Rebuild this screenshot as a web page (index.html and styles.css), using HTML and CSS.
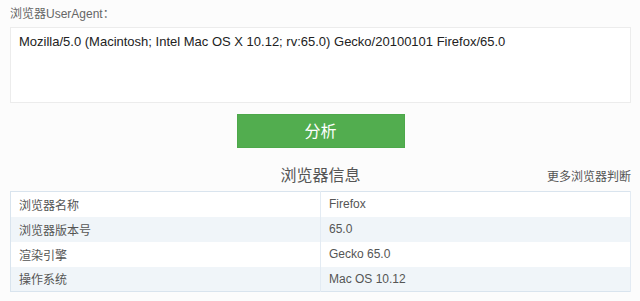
FILE: index.html
```html
<html>
    <head>
        <meta charset="UTF-8" />
        <link rel="stylesheet" href="styles.css">
    </head>
    <body>
        <div class="page">
            <div class="label">浏览器UserAgent：</div>
            <div class="ua_box">Mozilla/5.0 (Macintosh; Intel Mac OS X 10.12; rv:65.0) Gecko/20100101 Firefox/65.0</div>
            <div class="actions">
                <a href="javascript:;" class="analyze">分析</a>
            </div>
            <div class="info_head">
                <h2>浏览器信息</h2>
                <a href="javascript:;" class="more">更多浏览器判断</a>
            </div>
            <table class="info">
                <tr><td>浏览器名称</td><td>Firefox</td></tr>
                <tr><td>浏览器版本号</td><td>65.0</td></tr>
                <tr><td>渲染引擎</td><td>Gecko 65.0</td></tr>
                <tr><td>操作系统</td><td>Mac OS 10.12</td></tr>
            </table>
        </div>
    </body>
</html>
```

FILE: styles.css
```css
* {
    box-sizing: border-box;
}
body {
    margin: 0;
    background: #fcfcfc;
    font-family: "Liberation Sans", "Noto Sans CJK SC", sans-serif;
    font-size: 12px;
    color: #555;
}
.page {
    padding: 6px 9px 0 10px;
}
.label {
    height: 21px;
    line-height: 16px;
    font-size: 12px;
    color: #666;
}
.ua_box {
    height: 76px;
    padding: 6px 8px;
    background: #fff;
    border: 1px solid #ececec;
    font-size: 13px;
    line-height: 15px;
    color: #222;
}
.actions {
    display: flex;
    justify-content: center;
    padding-top: 11px;
}
.analyze {
    display: block;
    width: 168px;
    height: 34px;
    line-height: 33px;
    text-align: center;
    background: #52ad4f;
    border: 1px solid #4da84a;
    color: #fff;
    font-size: 16px;
    text-decoration: none;
}
.info_head {
    position: relative;
    height: 43px;
    padding-top: 16px;
}
.info_head h2 {
    margin: 0;
    text-align: center;
    font-size: 16px;
    font-weight: normal;
    line-height: 24px;
    color: #555;
}
.more {
    position: absolute;
    right: 0;
    top: 20px;
    font-size: 12px;
    line-height: 18px;
    color: #555;
    text-decoration: none;
}
.info {
    width: 100%;
    border-collapse: collapse;
    border: 1px solid #d9e4ee;
    background: #fff;
}
.info td {
    height: 25px;
    padding: 0 8px;
    border-right: 1px solid #e3ebf3;
    font-size: 12px;
    color: #555;
}
.info td:first-child {
    width: 310px;
}
.info tr:nth-child(even) td {
    background: #f0f5f9;
}
```
